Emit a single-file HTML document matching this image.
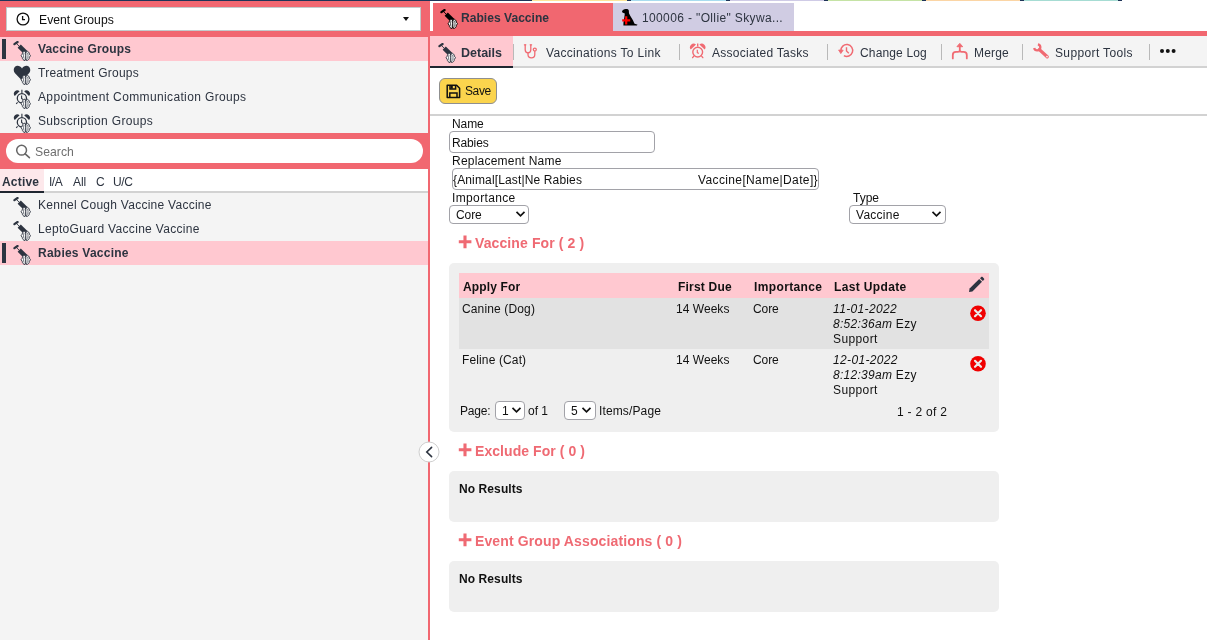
<!DOCTYPE html>
<html><head><meta charset="utf-8">
<style>
*{box-sizing:border-box;margin:0;padding:0}
html,body{width:1207px;height:640px;overflow:hidden;background:#fff;font-family:"Liberation Sans",sans-serif;color:#2d3440}
.a{position:absolute}
.t{position:absolute;white-space:pre;line-height:1;will-change:transform}
.red{background:#f16770}
.pink{background:#ffc8d0}
.sep{position:absolute;top:44px;width:1px;height:16px;background:#b9b9b9}
.ri{position:absolute;color:#f06a72}
</style></head>
<body>
<!-- top colour line -->
<div class="a" style="left:0;top:0;width:532px;height:1px;background:#1e3458"></div>
<div class="a" style="left:532px;top:0;width:95px;height:1px;background:#fde59a"></div>
<div class="a" style="left:627px;top:0;width:4px;height:1px;background:#1e3458"></div>
<div class="a" style="left:631px;top:0;width:95px;height:1px;background:#a8dcef"></div>
<div class="a" style="left:726px;top:0;width:4px;height:1px;background:#1e3458"></div>
<div class="a" style="left:730px;top:0;width:94px;height:1px;background:#cfcbe6"></div>
<div class="a" style="left:824px;top:0;width:4px;height:1px;background:#1e3458"></div>
<div class="a" style="left:828px;top:0;width:94px;height:1px;background:#c5e3a5"></div>
<div class="a" style="left:922px;top:0;width:4px;height:1px;background:#1e3458"></div>
<div class="a" style="left:926px;top:0;width:94px;height:1px;background:#fbd5a5"></div>
<div class="a" style="left:1020px;top:0;width:4px;height:1px;background:#1e3458"></div>
<div class="a" style="left:1024px;top:0;width:94px;height:1px;background:#a6dcd3"></div>
<div class="a" style="left:1118px;top:0;width:4px;height:1px;background:#1e3458"></div>

<!-- LEFT PANEL -->
<div class="a" style="left:0;top:1px;width:428px;height:639px;background:#f4f4f4"></div>
<div class="a red" style="left:428px;top:1px;width:2px;height:639px"></div>
<div class="a red" style="left:0;top:1px;width:430px;height:36px"></div>
<div class="a" style="left:6px;top:7px;width:415px;height:24px;background:#fff;border:1px solid #c3cccc"></div>
<svg class="a" style="left:16px;top:12px" width="14" height="14" viewBox="0 0 14 14"><circle cx="7" cy="7" r="5.9" fill="none" stroke="#111" stroke-width="1.3"/><path d="M6.6 4V7.6H9" fill="none" stroke="#111" stroke-width="1.3"/></svg>
<svg class="a" style="left:403px;top:17px" width="6" height="4" viewBox="0 0 6 4"><path d="M0 0H6L3 4Z" fill="#111"/></svg>

<div class="a pink" style="left:0;top:37px;width:428px;height:24px"></div>
<div class="a" style="left:2px;top:39px;width:4px;height:20px;background:#2d3440"></div>
<svg class="a" style="left:13px;top:41px;color:#2d3440" width="18" height="20"><svg width="100%" height="100%" viewBox="0 0 18 20" overflow="visible">
   <line x1="1.4" y1="3.2" x2="4.6" y2="1" stroke="currentColor" stroke-width="2.2" stroke-linecap="round"/>
   <line x1="3" y1="2.1" x2="6.6" y2="5.6" stroke="currentColor" stroke-width="0.9"/>
   <line x1="6.2" y1="5.2" x2="12.8" y2="11.6" stroke="currentColor" stroke-width="4.6"/>
   <svg x="7.8" y="9.4" width="10" height="10.6" viewBox="0 0 10 10.6" overflow="visible">
   <path d="M4.3 0.7C2.4 0.9 1.5 2.2 1.4 3.8L0.3 5.3L1.4 6.9C1.5 8.6 2.4 9.9 4.3 10.1C5 8.6 5.1 7 5 5.3C5.1 3.6 5 2.1 4.3 0.7Z" fill="#fff" stroke="currentColor" stroke-width="0.95"/>
   <path d="M5.7 0.7C7.6 0.9 8.5 2.2 8.6 3.8L9.7 5.3L8.6 6.9C8.5 8.6 7.6 9.9 5.7 10.1C5 8.6 4.9 7 5 5.3C4.9 3.6 5 2.1 5.7 0.7Z" fill="#fff" stroke="currentColor" stroke-width="0.95"/>
   <path d="M3.3 2.4C2.6 4 2.6 6.6 3.3 8.2M6.7 2.4C7.4 4 7.4 6.6 6.7 8.2" fill="none" stroke="currentColor" stroke-width="0.7"/>
  </svg>
  </svg></svg>
<svg class="a" style="left:13px;top:65px;color:#2d3440" width="18" height="20"><svg width="100%" height="100%" viewBox="0 0 18 20" overflow="visible">
   <path d="M9 15.4L2 8.2C-0.2 5.8 0.6 1.8 3.4 1C5.6 0.5 7.8 1.5 9 3.4C10.2 1.5 12.4 0.5 14.6 1C17.4 1.8 18.2 5.8 16 8.2Z" fill="currentColor"/>
   <svg x="7.8" y="9.4" width="10" height="10.6" viewBox="0 0 10 10.6" overflow="visible">
   <path d="M4.3 0.7C2.4 0.9 1.5 2.2 1.4 3.8L0.3 5.3L1.4 6.9C1.5 8.6 2.4 9.9 4.3 10.1C5 8.6 5.1 7 5 5.3C5.1 3.6 5 2.1 4.3 0.7Z" fill="#fff" stroke="currentColor" stroke-width="0.95"/>
   <path d="M5.7 0.7C7.6 0.9 8.5 2.2 8.6 3.8L9.7 5.3L8.6 6.9C8.5 8.6 7.6 9.9 5.7 10.1C5 8.6 4.9 7 5 5.3C4.9 3.6 5 2.1 5.7 0.7Z" fill="#fff" stroke="currentColor" stroke-width="0.95"/>
   <path d="M3.3 2.4C2.6 4 2.6 6.6 3.3 8.2M6.7 2.4C7.4 4 7.4 6.6 6.7 8.2" fill="none" stroke="currentColor" stroke-width="0.7"/>
  </svg>
  </svg></svg>
<svg class="a" style="left:13px;top:89px;color:#2d3440" width="18" height="20"><svg width="100%" height="100%" viewBox="0 0 18 20" overflow="visible">
   <circle cx="8.9" cy="9.2" r="4.6" fill="none" stroke="currentColor" stroke-width="1.3"/>
   <path d="M1.8 7A3.4 3.4 0 0 1 6.6 2.2Z" fill="currentColor"/>
   <path d="M11.2 2.2A3.4 3.4 0 0 1 16 7Z" fill="currentColor"/>
   <path d="M8.9 0.8V4.4M8.6 6.4V9.4L10.2 10.6M4.6 13.4L3.2 14.8M13.4 13.4L14.8 14.8" fill="none" stroke="currentColor" stroke-width="1.1"/>
   <svg x="7.8" y="9.4" width="10" height="10.6" viewBox="0 0 10 10.6" overflow="visible">
   <path d="M4.3 0.7C2.4 0.9 1.5 2.2 1.4 3.8L0.3 5.3L1.4 6.9C1.5 8.6 2.4 9.9 4.3 10.1C5 8.6 5.1 7 5 5.3C5.1 3.6 5 2.1 4.3 0.7Z" fill="#fff" stroke="currentColor" stroke-width="0.95"/>
   <path d="M5.7 0.7C7.6 0.9 8.5 2.2 8.6 3.8L9.7 5.3L8.6 6.9C8.5 8.6 7.6 9.9 5.7 10.1C5 8.6 4.9 7 5 5.3C4.9 3.6 5 2.1 5.7 0.7Z" fill="#fff" stroke="currentColor" stroke-width="0.95"/>
   <path d="M3.3 2.4C2.6 4 2.6 6.6 3.3 8.2M6.7 2.4C7.4 4 7.4 6.6 6.7 8.2" fill="none" stroke="currentColor" stroke-width="0.7"/>
  </svg>
  </svg></svg>
<svg class="a" style="left:13px;top:113px;color:#2d3440" width="18" height="20"><svg width="100%" height="100%" viewBox="0 0 18 20" overflow="visible">
   <circle cx="8.9" cy="9.2" r="4.6" fill="none" stroke="currentColor" stroke-width="1.3"/>
   <path d="M1.8 7A3.4 3.4 0 0 1 6.6 2.2Z" fill="currentColor"/>
   <path d="M11.2 2.2A3.4 3.4 0 0 1 16 7Z" fill="currentColor"/>
   <path d="M8.9 0.8V4.4M8.6 6.4V9.4L10.2 10.6M4.6 13.4L3.2 14.8M13.4 13.4L14.8 14.8" fill="none" stroke="currentColor" stroke-width="1.1"/>
   <svg x="7.8" y="9.4" width="10" height="10.6" viewBox="0 0 10 10.6" overflow="visible">
   <path d="M4.3 0.7C2.4 0.9 1.5 2.2 1.4 3.8L0.3 5.3L1.4 6.9C1.5 8.6 2.4 9.9 4.3 10.1C5 8.6 5.1 7 5 5.3C5.1 3.6 5 2.1 4.3 0.7Z" fill="#fff" stroke="currentColor" stroke-width="0.95"/>
   <path d="M5.7 0.7C7.6 0.9 8.5 2.2 8.6 3.8L9.7 5.3L8.6 6.9C8.5 8.6 7.6 9.9 5.7 10.1C5 8.6 4.9 7 5 5.3C4.9 3.6 5 2.1 5.7 0.7Z" fill="#fff" stroke="currentColor" stroke-width="0.95"/>
   <path d="M3.3 2.4C2.6 4 2.6 6.6 3.3 8.2M6.7 2.4C7.4 4 7.4 6.6 6.7 8.2" fill="none" stroke="currentColor" stroke-width="0.7"/>
  </svg>
  </svg></svg>

<div class="a red" style="left:0;top:133px;width:430px;height:36px"></div>
<div class="a" style="left:6px;top:139px;width:417px;height:24px;background:#fff;border-radius:12px"></div>
<svg class="a" style="left:15px;top:144px" width="16" height="15" viewBox="0 0 16 15"><circle cx="6.6" cy="6.2" r="4.9" fill="none" stroke="#666" stroke-width="1.5"/><path d="M10.2 9.8L14.4 13.6" stroke="#666" stroke-width="1.6" stroke-linecap="round"/></svg>

<div class="a" style="left:0;top:169px;width:428px;height:24px;background:#fff"></div>
<div class="a" style="left:0;top:169px;width:44px;height:22px;background:#fde8eb"></div>
<div class="a" style="left:0;top:191px;width:428px;height:2px;background:#d2d2d2"></div>
<div class="a" style="left:0;top:191px;width:44px;height:2px;background:#1f2630"></div>

<svg class="a" style="left:13px;top:197px;color:#2d3440" width="18" height="20"><svg width="100%" height="100%" viewBox="0 0 18 20" overflow="visible">
   <line x1="1.4" y1="3.2" x2="4.6" y2="1" stroke="currentColor" stroke-width="2.2" stroke-linecap="round"/>
   <line x1="3" y1="2.1" x2="6.6" y2="5.6" stroke="currentColor" stroke-width="0.9"/>
   <line x1="6.2" y1="5.2" x2="12.8" y2="11.6" stroke="currentColor" stroke-width="4.6"/>
   <svg x="7.8" y="9.4" width="10" height="10.6" viewBox="0 0 10 10.6" overflow="visible">
   <path d="M4.3 0.7C2.4 0.9 1.5 2.2 1.4 3.8L0.3 5.3L1.4 6.9C1.5 8.6 2.4 9.9 4.3 10.1C5 8.6 5.1 7 5 5.3C5.1 3.6 5 2.1 4.3 0.7Z" fill="#fff" stroke="currentColor" stroke-width="0.95"/>
   <path d="M5.7 0.7C7.6 0.9 8.5 2.2 8.6 3.8L9.7 5.3L8.6 6.9C8.5 8.6 7.6 9.9 5.7 10.1C5 8.6 4.9 7 5 5.3C4.9 3.6 5 2.1 5.7 0.7Z" fill="#fff" stroke="currentColor" stroke-width="0.95"/>
   <path d="M3.3 2.4C2.6 4 2.6 6.6 3.3 8.2M6.7 2.4C7.4 4 7.4 6.6 6.7 8.2" fill="none" stroke="currentColor" stroke-width="0.7"/>
  </svg>
  </svg></svg>
<svg class="a" style="left:13px;top:221px;color:#2d3440" width="18" height="20"><svg width="100%" height="100%" viewBox="0 0 18 20" overflow="visible">
   <line x1="1.4" y1="3.2" x2="4.6" y2="1" stroke="currentColor" stroke-width="2.2" stroke-linecap="round"/>
   <line x1="3" y1="2.1" x2="6.6" y2="5.6" stroke="currentColor" stroke-width="0.9"/>
   <line x1="6.2" y1="5.2" x2="12.8" y2="11.6" stroke="currentColor" stroke-width="4.6"/>
   <svg x="7.8" y="9.4" width="10" height="10.6" viewBox="0 0 10 10.6" overflow="visible">
   <path d="M4.3 0.7C2.4 0.9 1.5 2.2 1.4 3.8L0.3 5.3L1.4 6.9C1.5 8.6 2.4 9.9 4.3 10.1C5 8.6 5.1 7 5 5.3C5.1 3.6 5 2.1 4.3 0.7Z" fill="#fff" stroke="currentColor" stroke-width="0.95"/>
   <path d="M5.7 0.7C7.6 0.9 8.5 2.2 8.6 3.8L9.7 5.3L8.6 6.9C8.5 8.6 7.6 9.9 5.7 10.1C5 8.6 4.9 7 5 5.3C4.9 3.6 5 2.1 5.7 0.7Z" fill="#fff" stroke="currentColor" stroke-width="0.95"/>
   <path d="M3.3 2.4C2.6 4 2.6 6.6 3.3 8.2M6.7 2.4C7.4 4 7.4 6.6 6.7 8.2" fill="none" stroke="currentColor" stroke-width="0.7"/>
  </svg>
  </svg></svg>
<div class="a pink" style="left:0;top:241px;width:428px;height:24px"></div>
<div class="a" style="left:2px;top:243px;width:4px;height:20px;background:#2d3440"></div>
<svg class="a" style="left:13px;top:245px;color:#2d3440" width="18" height="20"><svg width="100%" height="100%" viewBox="0 0 18 20" overflow="visible">
   <line x1="1.4" y1="3.2" x2="4.6" y2="1" stroke="currentColor" stroke-width="2.2" stroke-linecap="round"/>
   <line x1="3" y1="2.1" x2="6.6" y2="5.6" stroke="currentColor" stroke-width="0.9"/>
   <line x1="6.2" y1="5.2" x2="12.8" y2="11.6" stroke="currentColor" stroke-width="4.6"/>
   <svg x="7.8" y="9.4" width="10" height="10.6" viewBox="0 0 10 10.6" overflow="visible">
   <path d="M4.3 0.7C2.4 0.9 1.5 2.2 1.4 3.8L0.3 5.3L1.4 6.9C1.5 8.6 2.4 9.9 4.3 10.1C5 8.6 5.1 7 5 5.3C5.1 3.6 5 2.1 4.3 0.7Z" fill="#fff" stroke="currentColor" stroke-width="0.95"/>
   <path d="M5.7 0.7C7.6 0.9 8.5 2.2 8.6 3.8L9.7 5.3L8.6 6.9C8.5 8.6 7.6 9.9 5.7 10.1C5 8.6 4.9 7 5 5.3C4.9 3.6 5 2.1 5.7 0.7Z" fill="#fff" stroke="currentColor" stroke-width="0.95"/>
   <path d="M3.3 2.4C2.6 4 2.6 6.6 3.3 8.2M6.7 2.4C7.4 4 7.4 6.6 6.7 8.2" fill="none" stroke="currentColor" stroke-width="0.7"/>
  </svg>
  </svg></svg>

<!-- RIGHT: document tabs -->
<div class="a red" style="left:433px;top:3px;width:180px;height:33px"></div>
<div class="a red" style="left:430px;top:31px;width:777px;height:5px"></div>
<div class="a" style="left:613px;top:3px;width:181px;height:28px;background:#d0cce3"></div>
<svg class="a" style="left:440px;top:9px;color:#000" width="18" height="20"><svg width="100%" height="100%" viewBox="0 0 18 20" overflow="visible">
   <line x1="1.4" y1="3.2" x2="4.6" y2="1" stroke="currentColor" stroke-width="2.2" stroke-linecap="round"/>
   <line x1="3" y1="2.1" x2="6.6" y2="5.6" stroke="currentColor" stroke-width="0.9"/>
   <line x1="6.2" y1="5.2" x2="12.8" y2="11.6" stroke="currentColor" stroke-width="4.6"/>
   <svg x="7.8" y="9.4" width="10" height="10.6" viewBox="0 0 10 10.6" overflow="visible">
   <path d="M4.3 0.7C2.4 0.9 1.5 2.2 1.4 3.8L0.3 5.3L1.4 6.9C1.5 8.6 2.4 9.9 4.3 10.1C5 8.6 5.1 7 5 5.3C5.1 3.6 5 2.1 4.3 0.7Z" fill="#fff" stroke="currentColor" stroke-width="0.95"/>
   <path d="M5.7 0.7C7.6 0.9 8.5 2.2 8.6 3.8L9.7 5.3L8.6 6.9C8.5 8.6 7.6 9.9 5.7 10.1C5 8.6 4.9 7 5 5.3C4.9 3.6 5 2.1 5.7 0.7Z" fill="#fff" stroke="currentColor" stroke-width="0.95"/>
   <path d="M3.3 2.4C2.6 4 2.6 6.6 3.3 8.2M6.7 2.4C7.4 4 7.4 6.6 6.7 8.2" fill="none" stroke="currentColor" stroke-width="0.7"/>
  </svg>
  </svg></svg>
<svg class="a" style="left:616px;top:4px" width="26" height="26" viewBox="0 0 26 26">
 <path d="M6 7.2C6.4 6.2 8 5.4 9.6 5C11 4.8 12.4 5.2 12.8 6.4C13 7.6 12.8 8.6 13.2 9.8C14.2 12 16 14.4 17.2 16.8C17.8 18 18.2 19.2 18.6 19.8C19.6 20.2 20.8 20.4 21.6 20.8L20.8 21.4H7.4C7.2 19.4 7.6 17.4 8 15.4C8.4 13.4 8.6 11.4 8.8 9.6C8 9.2 7 8.8 6.4 8.4Z" fill="#000"/>
 <path d="M10.2 12.2V20.6M6.2 16.4H14.2" stroke="#f00" stroke-width="2.2"/>
</svg>

<!-- tab bar -->
<div class="a" style="left:430px;top:36px;width:777px;height:30px;background:#f4f4f4"></div>
<div class="a" style="left:430px;top:66px;width:777px;height:2px;background:#d2d2d2"></div>
<div class="a pink" style="left:430px;top:36px;width:83px;height:30px"></div>
<div class="a" style="left:430px;top:66px;width:83px;height:2px;background:#1f2630"></div>
<svg class="a" style="left:438px;top:43px;color:#2d3440" width="18" height="20"><svg width="100%" height="100%" viewBox="0 0 18 20" overflow="visible">
   <line x1="1.4" y1="3.2" x2="4.6" y2="1" stroke="currentColor" stroke-width="2.2" stroke-linecap="round"/>
   <line x1="3" y1="2.1" x2="6.6" y2="5.6" stroke="currentColor" stroke-width="0.9"/>
   <line x1="6.2" y1="5.2" x2="12.8" y2="11.6" stroke="currentColor" stroke-width="4.6"/>
   <svg x="7.8" y="9.4" width="10" height="10.6" viewBox="0 0 10 10.6" overflow="visible">
   <path d="M4.3 0.7C2.4 0.9 1.5 2.2 1.4 3.8L0.3 5.3L1.4 6.9C1.5 8.6 2.4 9.9 4.3 10.1C5 8.6 5.1 7 5 5.3C5.1 3.6 5 2.1 4.3 0.7Z" fill="#fff" stroke="currentColor" stroke-width="0.95"/>
   <path d="M5.7 0.7C7.6 0.9 8.5 2.2 8.6 3.8L9.7 5.3L8.6 6.9C8.5 8.6 7.6 9.9 5.7 10.1C5 8.6 4.9 7 5 5.3C4.9 3.6 5 2.1 5.7 0.7Z" fill="#fff" stroke="currentColor" stroke-width="0.95"/>
   <path d="M3.3 2.4C2.6 4 2.6 6.6 3.3 8.2M6.7 2.4C7.4 4 7.4 6.6 6.7 8.2" fill="none" stroke="currentColor" stroke-width="0.7"/>
  </svg>
  </svg></svg>
<div class="sep" style="left:513px"></div>
<div class="sep" style="left:679px"></div>
<div class="sep" style="left:827px"></div>
<div class="sep" style="left:941px"></div>
<div class="sep" style="left:1022px"></div>
<div class="sep" style="left:1149px"></div>
<!-- stethoscope -->
<svg class="ri" style="left:518px;top:40px" width="24" height="22" viewBox="0 0 24 22" fill="none" stroke="currentColor" stroke-width="1.3" stroke-linecap="round">
 <path d="M7.2 4.8V9.8Q7.2 12.8 10 12.8Q12.8 12.8 12.8 9.8V4.8"/>
 <path d="M6.4 4.8H7.8M12.2 4.8H13.6"/>
 <path d="M10 12.8V14.6Q10 17.9 13.4 17.9Q16.8 17.9 16.8 14.6V11.2"/>
 <circle cx="16.8" cy="9.6" r="1.5"/>
</svg>
<!-- alarm -->
<svg class="ri" style="left:686px;top:40px" width="24" height="22" viewBox="0 0 24 22" fill="none" stroke="currentColor">
 <circle cx="11.7" cy="12.1" r="4.9" stroke-width="1.4"/>
 <path d="M4.8 9.6A3.7 3.7 0 0 1 10 4.4Z" fill="currentColor" stroke="none"/>
 <path d="M13.4 4.4A3.7 3.7 0 0 1 18.6 9.6Z" fill="currentColor" stroke="none"/>
 <path d="M11.7 3.6V6.6" stroke-width="1.4"/>
 <path d="M11.3 9.8V12.6L12.8 13.6" stroke-width="1.2"/>
 <path d="M7.6 16.4L6.6 17.6M15.8 16.4L16.8 17.6" stroke-width="1.4" stroke-linecap="round"/>
</svg>
<!-- history -->
<svg class="ri" style="left:834px;top:40px" width="24" height="22" viewBox="0 0 24 22" fill="none" stroke="currentColor" stroke-width="1.5">
 <path d="M6.9 10.8A5.9 5.9 0 1 1 9.9 15.6"/>
 <path d="M4.6 10L9.2 10.2L6.8 13.6Z" fill="currentColor" stroke-width="0.8" stroke-linejoin="round"/>
 <path d="M12.5 7.2V11L14.8 13.2" stroke-width="1.4"/>
</svg>
<!-- merge -->
<svg class="ri" style="left:947px;top:40px" width="24" height="22" viewBox="0 0 24 22" fill="none" stroke="currentColor" stroke-width="1.8" stroke-linecap="round">
 <path d="M12.8 6V10.8Q12.8 11.8 10.8 11.8H9Q5.8 11.8 5.8 15V18.4"/>
 <path d="M12.8 10.8Q12.8 11.8 14.8 11.8H16.6Q19.8 11.8 19.8 15V18.4"/>
 <path d="M10.2 6.4L12.8 3.4L15.4 6.4Z" fill="currentColor" stroke-width="1" stroke-linejoin="round"/>
</svg>
<!-- wrench -->
<svg class="ri" style="left:1029px;top:40px" width="24" height="22" viewBox="0 0 24 22" fill="none" stroke="currentColor">
 <path d="M8.9 4.3A3.1 3.1 0 1 1 5.2 8" stroke-width="2.3"/>
 <path d="M10.4 9.6L18.2 16.8" stroke-width="3.3" stroke-linecap="round"/>
 <circle cx="18" cy="16.6" r="0.85" fill="#f4f4f4" stroke="none"/>
</svg>
<!-- more dots -->
<svg class="a" style="left:1159px;top:48px" width="18" height="6" viewBox="0 0 18 6"><circle cx="3" cy="3" r="2" fill="#111"/><circle cx="8.8" cy="3" r="2" fill="#111"/><circle cx="14.6" cy="3" r="2" fill="#111"/></svg>

<!-- toolbar -->
<div class="a" style="left:439px;top:78px;width:58px;height:26px;background:#fbd44d;border:1px solid #8f8f8f;border-radius:6px"></div>
<svg class="a" style="left:446px;top:84px" width="15" height="15" viewBox="0 0 15 15" fill="none" stroke="#111" stroke-width="1.5">
 <path d="M1.2 1.2H10.6L13.6 4.2V13.6H1.2Z" stroke-linejoin="round"/>
 <path d="M4 1.2V5H9.6V1.2" />
 <path d="M3.8 13.6V9H11V13.6"/>
 <rect x="4.6" y="1.6" width="2.2" height="3" fill="#111" stroke="none"/>
</svg>
<div class="a" style="left:430px;top:114px;width:777px;height:2px;background:#d2d2d2"></div>

<!-- form inputs -->
<div class="a" style="left:449px;top:131px;width:206px;height:22px;border:1px solid #a2a2a8;border-radius:4px;background:#fff"></div>
<div class="a" style="left:452px;top:168px;width:367px;height:22px;border:1px solid #a2a2a8;border-radius:4px;background:#fff"></div>
<div class="a" style="left:449px;top:205px;width:80px;height:19px;border:1px solid #a2a2a8;border-radius:4px;background:#fff"></div>
<svg class="a" style="left:515px;top:210px" width="11" height="8" viewBox="0 0 11 8"><path d="M1.5 1.8L5.5 5.8L9.5 1.8" fill="none" stroke="#111" stroke-width="1.7"/></svg>
<div class="a" style="left:849px;top:205px;width:97px;height:19px;border:1px solid #a2a2a8;border-radius:4px;background:#fff"></div>
<svg class="a" style="left:931px;top:210px" width="11" height="8" viewBox="0 0 11 8"><path d="M1.5 1.8L5.5 5.8L9.5 1.8" fill="none" stroke="#111" stroke-width="1.7"/></svg>

<!-- section plus icons -->
<svg class="a" style="left:458px;top:235px" width="14" height="14" viewBox="0 0 14 14"><path d="M7 0.4V13.2M0.8 6.8H13.4" stroke="#ef6a73" stroke-width="3.1"/></svg>
<svg class="a" style="left:458px;top:443px" width="14" height="14" viewBox="0 0 14 14"><path d="M7 0.4V13.2M0.8 6.8H13.4" stroke="#ef6a73" stroke-width="3.1"/></svg>
<svg class="a" style="left:458px;top:533px" width="14" height="14" viewBox="0 0 14 14"><path d="M7 0.4V13.2M0.8 6.8H13.4" stroke="#ef6a73" stroke-width="3.1"/></svg>

<!-- vaccine for panel -->
<div class="a" style="left:449px;top:263px;width:550px;height:169px;background:#efefef;border-radius:5px"></div>
<div class="a" style="left:459px;top:273px;width:530px;height:25px;background:#ffc8d0"></div>
<div class="a" style="left:459px;top:298px;width:530px;height:51px;background:#e2e2e2"></div>
<svg class="a" style="left:967px;top:276px" width="18" height="18" viewBox="0 0 18 18"><path d="M2 16L2.6 12.6L12.2 3L15 5.8L5.4 15.4Z" fill="#2d3440"/><path d="M13 2.2L14.2 1C14.6 0.6 15.2 0.6 15.6 1L17 2.4C17.4 2.8 17.4 3.4 17 3.8L15.8 5Z" fill="#2d3440"/></svg>
<svg class="a" style="left:969px;top:305px" width="18" height="18" viewBox="0 0 18 18"><circle cx="9" cy="8.2" r="7.8" fill="#f00000"/><path d="M6 5.2L12 11.2M12 5.2L6 11.2" stroke="#eaeaea" stroke-width="2.2" stroke-linecap="round"/></svg>
<svg class="a" style="left:969px;top:356px" width="18" height="18" viewBox="0 0 18 18"><circle cx="9" cy="7.8" r="7.8" fill="#f00000"/><path d="M6 4.8L12 10.8M12 4.8L6 10.8" stroke="#eaeaea" stroke-width="2.2" stroke-linecap="round"/></svg>
<div class="a" style="left:495px;top:401px;width:30px;height:19px;border:1px solid #a2a2a8;border-radius:4px;background:#fff"></div>
<svg class="a" style="left:511px;top:406px" width="11" height="8" viewBox="0 0 11 8"><path d="M1.5 1.8L5.5 5.8L9.5 1.8" fill="none" stroke="#111" stroke-width="1.7"/></svg>
<div class="a" style="left:564px;top:401px;width:32px;height:19px;border:1px solid #a2a2a8;border-radius:4px;background:#fff"></div>
<svg class="a" style="left:581px;top:406px" width="11" height="8" viewBox="0 0 11 8"><path d="M1.5 1.8L5.5 5.8L9.5 1.8" fill="none" stroke="#111" stroke-width="1.7"/></svg>

<!-- no results panels -->
<div class="a" style="left:449px;top:471px;width:550px;height:51px;background:#efefef;border-radius:5px"></div>
<div class="a" style="left:449px;top:561px;width:550px;height:51px;background:#efefef;border-radius:5px"></div>

<!-- collapse btn -->
<svg class="a" style="left:418px;top:441px" width="22" height="22" viewBox="0 0 22 22"><circle cx="11" cy="11" r="10" fill="#fff" stroke="#cfcfcf" stroke-width="1"/><path d="M13.6 6.4L8.8 11L13.6 15.6" fill="none" stroke="#2d3440" stroke-width="1.6" stroke-linecap="round"/></svg>
<div class='t' style='left:39px;top:14px;font-size:12.2px;font-weight:400;font-style:normal;color:#111;letter-spacing:0.024px'>Event Groups</div>
<div class='t' style='left:38px;top:43px;font-size:12px;font-weight:700;font-style:normal;color:#2d3440;letter-spacing:0.169px'>Vaccine Groups</div>
<div class='t' style='left:38px;top:67px;font-size:12px;font-weight:400;font-style:normal;color:#2d3440;letter-spacing:0.257px'>Treatment Groups</div>
<div class='t' style='left:38px;top:91px;font-size:12px;font-weight:400;font-style:normal;color:#2d3440;letter-spacing:0.366px'>Appointment Communication Groups</div>
<div class='t' style='left:38px;top:115px;font-size:12px;font-weight:400;font-style:normal;color:#2d3440;letter-spacing:0.337px'>Subscription Groups</div>
<div class='t' style='left:35px;top:146px;font-size:12.2px;font-weight:400;font-style:normal;color:#6e6e6e;letter-spacing:0.035px'>Search</div>
<div class='t' style='left:2px;top:176px;font-size:12px;font-weight:700;font-style:normal;color:#2d3440;letter-spacing:0.194px'>Active</div>
<div class='t' style='left:49px;top:176px;font-size:12px;font-weight:400;font-style:normal;color:#2d3440;letter-spacing:-0.486px'>I/A</div>
<div class='t' style='left:73px;top:176px;font-size:12px;font-weight:400;font-style:normal;color:#2d3440;letter-spacing:-0.072px'>All</div>
<div class='t' style='left:96px;top:176px;font-size:12px;font-weight:400;font-style:normal;color:#2d3440'>C</div>
<div class='t' style='left:113px;top:176px;font-size:12px;font-weight:400;font-style:normal;color:#2d3440;letter-spacing:-0.336px'>U/C</div>
<div class='t' style='left:38px;top:199px;font-size:12px;font-weight:400;font-style:normal;color:#2d3440;letter-spacing:0.265px'>Kennel Cough Vaccine Vaccine</div>
<div class='t' style='left:38px;top:223px;font-size:12px;font-weight:400;font-style:normal;color:#2d3440;letter-spacing:0.310px'>LeptoGuard Vaccine Vaccine</div>
<div class='t' style='left:38px;top:247px;font-size:12px;font-weight:700;font-style:normal;color:#2d3440;letter-spacing:0.239px'>Rabies Vaccine</div>
<div class='t' style='left:461px;top:12px;font-size:12.1px;font-weight:700;font-style:normal;color:#2d3440'>Rabies Vaccine</div>
<div class='t' style='left:642px;top:12px;font-size:12px;font-weight:400;font-style:normal;color:#2d3440;letter-spacing:0.366px'>100006 - &quot;Ollie&quot; Skywa...</div>
<div class='t' style='left:461px;top:47px;font-size:12.5px;font-weight:700;font-style:normal;color:#2d3440'>Details</div>
<div class='t' style='left:546px;top:47px;font-size:12px;font-weight:400;font-style:normal;color:#2d3440;letter-spacing:0.326px'>Vaccinations To Link</div>
<div class='t' style='left:712px;top:47px;font-size:12px;font-weight:400;font-style:normal;color:#2d3440;letter-spacing:0.267px'>Associated Tasks</div>
<div class='t' style='left:860px;top:47px;font-size:12px;font-weight:400;font-style:normal;color:#2d3440;letter-spacing:0.145px'>Change Log</div>
<div class='t' style='left:974px;top:47px;font-size:12px;font-weight:400;font-style:normal;color:#2d3440;letter-spacing:0.171px'>Merge</div>
<div class='t' style='left:1055px;top:47px;font-size:12px;font-weight:400;font-style:normal;color:#2d3440;letter-spacing:0.369px'>Support Tools</div>
<div class='t' style='left:465px;top:85px;font-size:12px;font-weight:400;font-style:normal;color:#111;letter-spacing:-0.386px'>Save</div>
<div class='t' style='left:452px;top:118px;font-size:12px;font-weight:400;font-style:normal;color:#111;letter-spacing:-0.105px'>Name</div>
<div class='t' style='left:452px;top:137px;font-size:12px;font-weight:400;font-style:normal;color:#111;letter-spacing:-0.132px'>Rabies</div>
<div class='t' style='left:452px;top:155px;font-size:12px;font-weight:400;font-style:normal;color:#111;letter-spacing:0.223px'>Replacement Name</div>
<div class='t' style='left:453px;top:174px;font-size:12px;font-weight:400;font-style:normal;color:#111;letter-spacing:0.145px'>{Animal[Last|Ne Rabies</div>
<div class='t' style='left:698px;top:174px;font-size:12px;font-weight:400;font-style:normal;color:#111;letter-spacing:0.369px'>Vaccine[Name|Date]}</div>
<div class='t' style='left:452px;top:192px;font-size:12px;font-weight:400;font-style:normal;color:#111;letter-spacing:0.363px'>Importance</div>
<div class='t' style='left:853px;top:192px;font-size:12px;font-weight:400;font-style:normal;color:#111'>Type</div>
<div class='t' style='left:456px;top:209px;font-size:12px;font-weight:400;font-style:normal;color:#111;letter-spacing:-0.105px'>Core</div>
<div class='t' style='left:856px;top:209px;font-size:12px;font-weight:400;font-style:normal;color:#111;letter-spacing:0.265px'>Vaccine</div>
<div class='t' style='left:475px;top:236px;font-size:14px;font-weight:700;font-style:normal;color:#ef6a73;letter-spacing:0.108px'>Vaccine For ( 2 )</div>
<div class='t' style='left:463px;top:281px;font-size:12px;font-weight:700;font-style:normal;color:#111;letter-spacing:0.138px'>Apply For</div>
<div class='t' style='left:678px;top:281px;font-size:12px;font-weight:700;font-style:normal;color:#111;letter-spacing:0.198px'>First Due</div>
<div class='t' style='left:754px;top:281px;font-size:12px;font-weight:700;font-style:normal;color:#111;letter-spacing:0.368px'>Importance</div>
<div class='t' style='left:834px;top:281px;font-size:12px;font-weight:700;font-style:normal;color:#111;letter-spacing:0.361px'>Last Update</div>
<div class='t' style='left:462px;top:303px;font-size:12px;font-weight:400;font-style:normal;color:#111;letter-spacing:0.139px'>Canine (Dog)</div>
<div class='t' style='left:676px;top:303px;font-size:12px;font-weight:400;font-style:normal;color:#111;letter-spacing:0.037px'>14 Weeks</div>
<div class='t' style='left:753px;top:303px;font-size:12px;font-weight:400;font-style:normal;color:#111;letter-spacing:-0.105px'>Core</div>
<div class='t' style='left:833.4px;top:303px;font-size:12px;color:#111'><i style="letter-spacing:0.35px">11-01-2022</i></div>
<div class='t' style='left:833.4px;top:318px;font-size:12px;color:#111'><span style="letter-spacing:0.28px"><i>8:52:36am</i> Ezy</span></div>
<div class='t' style='left:833px;top:333px;font-size:12px;font-weight:400;font-style:normal;color:#111;letter-spacing:0.395px'>Support</div>
<div class='t' style='left:462px;top:354px;font-size:12px;font-weight:400;font-style:normal;color:#111;letter-spacing:0.128px'>Feline (Cat)</div>
<div class='t' style='left:676px;top:354px;font-size:12px;font-weight:400;font-style:normal;color:#111;letter-spacing:0.037px'>14 Weeks</div>
<div class='t' style='left:753px;top:354px;font-size:12px;font-weight:400;font-style:normal;color:#111;letter-spacing:-0.105px'>Core</div>
<div class='t' style='left:833.4px;top:354px;font-size:12px;color:#111'><i style="letter-spacing:0.35px">12-01-2022</i></div>
<div class='t' style='left:833.4px;top:369px;font-size:12px;color:#111'><span style="letter-spacing:0.28px"><i>8:12:39am</i> Ezy</span></div>
<div class='t' style='left:833px;top:384px;font-size:12px;font-weight:400;font-style:normal;color:#111;letter-spacing:0.395px'>Support</div>
<div class='t' style='left:460px;top:405px;font-size:12px;font-weight:400;font-style:normal;color:#111;letter-spacing:-0.215px'>Page:</div>
<div class='t' style='left:502px;top:405px;font-size:12px;font-weight:400;font-style:normal;color:#111'>1</div>
<div class='t' style='left:528px;top:405px;font-size:12px;font-weight:400;font-style:normal;color:#111'>of 1</div>
<div class='t' style='left:571px;top:405px;font-size:12px;font-weight:400;font-style:normal;color:#111'>5</div>
<div class='t' style='left:599px;top:405px;font-size:12px;font-weight:400;font-style:normal;color:#111;letter-spacing:0.133px'>Items/Page</div>
<div class='t' style='left:897px;top:406px;font-size:12px;font-weight:400;font-style:normal;color:#111;letter-spacing:0.292px'>1 - 2 of 2</div>
<div class='t' style='left:475px;top:444px;font-size:14px;font-weight:700;font-style:normal;color:#ef6a73;letter-spacing:0.061px'>Exclude For ( 0 )</div>
<div class='t' style='left:459px;top:483px;font-size:12px;font-weight:700;font-style:normal;color:#111;letter-spacing:0.090px'>No Results</div>
<div class='t' style='left:475px;top:534px;font-size:14px;font-weight:700;font-style:normal;color:#ef6a73;letter-spacing:0.124px'>Event Group Associations ( 0 )</div>
<div class='t' style='left:459px;top:573px;font-size:12px;font-weight:700;font-style:normal;color:#111;letter-spacing:0.090px'>No Results</div>
</body></html>
